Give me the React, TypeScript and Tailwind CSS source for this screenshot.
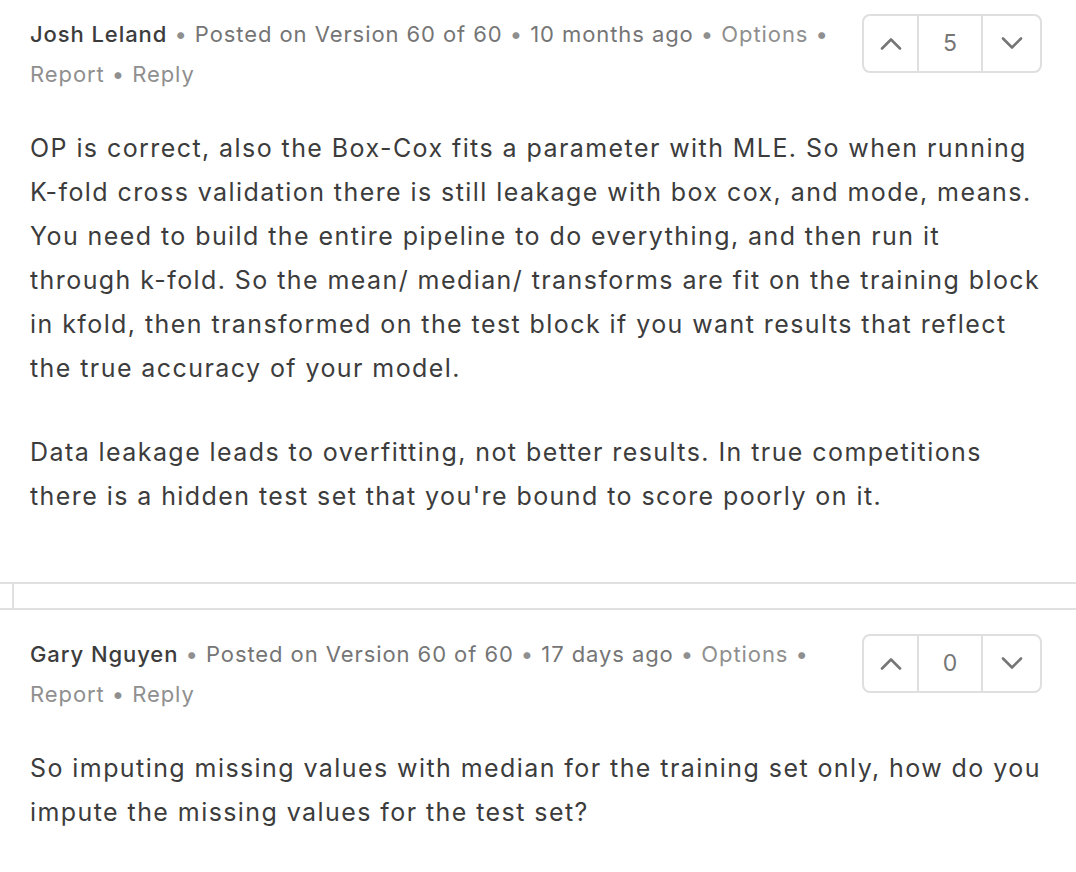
import React from "react";

interface CommentProps {
  author: string;
  ago: string;
  votes: number;
  paragraphs: string[];
}

function Chevron({ up }: { up?: boolean }) {
  return (
    <svg width="22" height="13" viewBox="0 0 22 13" fill="none">
      <path
        d={up ? "M2 11.5L11 2.5L20 11.5" : "M2 1.5L11 10.5L20 1.5"}
        stroke="#767676"
        strokeWidth="2.6"
        strokeLinecap="round"
        strokeLinejoin="round"
      />
    </svg>
  );
}

function VoteBox({ votes }: { votes: number }) {
  return (
    <div className="flex h-[59px] shrink-0 rounded-[8px] border-2 border-[#dfdfdf] bg-white">
      <button className="flex w-[55px] items-center justify-center border-r-2 border-[#dfdfdf]">
        <Chevron up />
      </button>
      <div className="flex w-[64px] items-center justify-center border-r-2 border-[#dfdfdf] text-[23px] text-[#767676]">
        {votes}
      </div>
      <button className="flex w-[57px] items-center justify-center">
        <Chevron />
      </button>
    </div>
  );
}

function Comment({ author, ago, votes, paragraphs }: CommentProps) {
  return (
    <div className="px-[30px]">
      <div className="mr-[4px] flex items-start gap-[20px]">
        <div className="flex-1 text-[22px] leading-[40px] tracking-[0.042em] text-[#757575]">
          <span className="font-medium text-[#3c3c3c]">{author}</span>
          <span className="text-[#8f8f8f]"> • </span>
          Posted on Version 60 of 60
          <span className="text-[#8f8f8f]"> • </span>
          {ago}
          <span className="text-[#8f8f8f]"> • Options • Report • Reply</span>
        </div>
        <VoteBox votes={votes} />
      </div>
      <div className="mt-[32px] flex flex-col gap-[40px] text-[25px] leading-[44px] tracking-[0.057em] text-[#3c3c3c]">
        {paragraphs.map((p, i) => (
          <p key={i}>{p}</p>
        ))}
      </div>
    </div>
  );
}

export default function App() {
  return (
    <div
      className="min-h-screen bg-white pt-[14px]"
      style={{ fontFamily: "Inter, 'Noto Sans', sans-serif" }}
    >
      <Comment
        author="Josh Leland"
        ago="10 months ago"
        votes={5}
        paragraphs={[
          "OP is correct, also the Box-Cox fits a parameter with MLE. So when running K-fold cross validation there is still leakage with box cox, and mode, means. You need to build the entire pipeline to do everything, and then run it through k-fold. So the mean/ median/ transforms are fit on the training block in kfold, then transformed on the test block if you want results that reflect the true accuracy of your model.",
          "Data leakage leads to overfitting, not better results. In true competitions there is a hidden test set that you're bound to score poorly on it.",
        ]}
      />
      <div className="mt-[64px] border-y-2 border-[#e0e0e0] pl-[12px]">
        <div className="h-[24px] border-l-2 border-[#e0e0e0]" />
      </div>
      <div className="pt-[24px]">
        <Comment
          author="Gary Nguyen"
          ago="17 days ago"
          votes={0}
          paragraphs={[
            "So imputing missing values with median for the training set only, how do you impute the missing values for the test set?",
          ]}
        />
      </div>
    </div>
  );
}
